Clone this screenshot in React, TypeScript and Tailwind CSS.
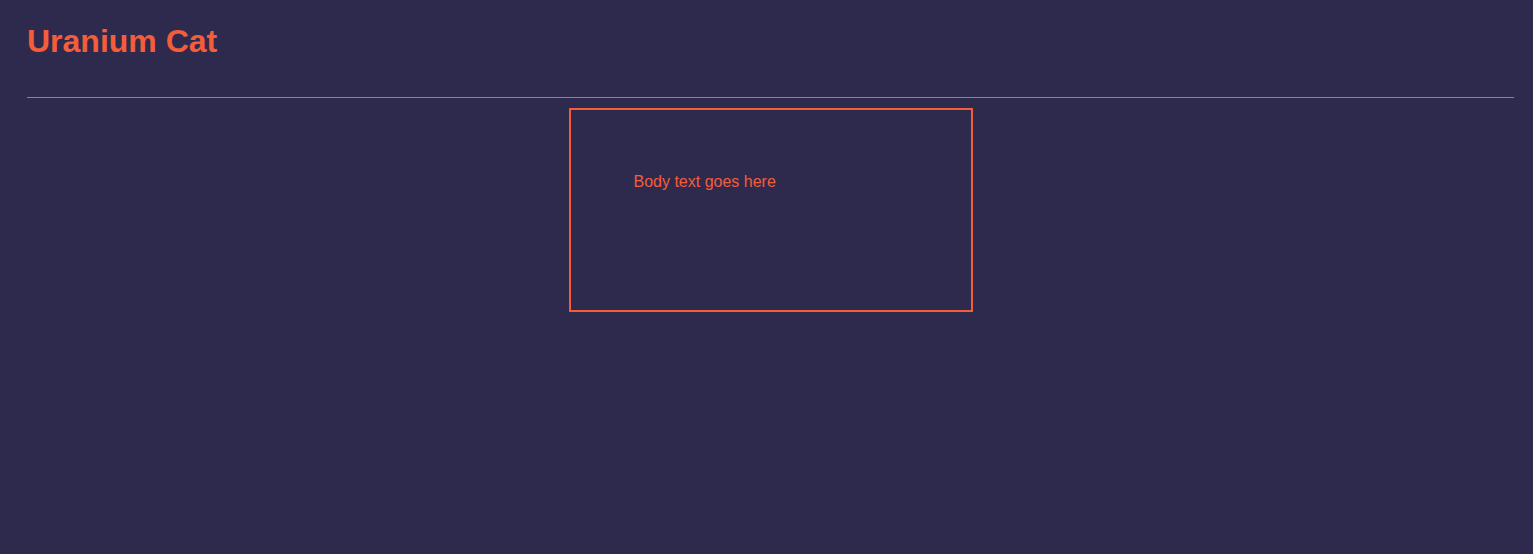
export default function App() {
  return (
    <div className="min-h-[554px] w-full bg-[#2e2a4e] pl-[27px] pr-[19px] pt-[23px]" style={{ fontFamily: '"Liberation Sans", Arial, sans-serif' }}>
      <h1 className="text-[32px] font-bold leading-[37px] text-[#f45d3a]">Uranium Cat</h1>
      <div className="mt-[37px] h-px bg-[#f0603e]" />
      <div className="mx-auto mt-[10px] h-[204px] w-[404px] border-2 border-[#f45d3a] pl-[63px] pt-[63px]">
        <p className="text-[16px] leading-[18px] text-[#f45d3a]">Body text goes here</p>
      </div>
    </div>
  );
}
